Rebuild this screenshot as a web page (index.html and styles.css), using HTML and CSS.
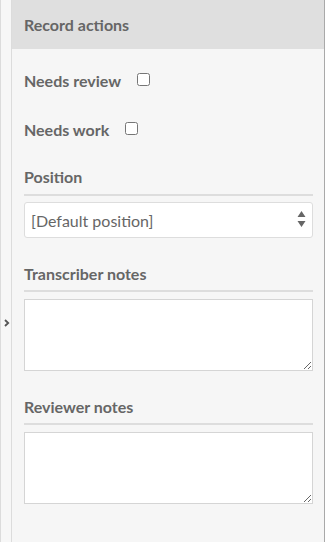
FILE: index.html
```html
<!DOCTYPE html>
<html lang="en">
<head>
<meta charset="utf-8">
<title>Record actions</title>
<link rel="stylesheet" href="styles.css">
</head>
<body>
<div class="layout">
  <div class="strip">
    <svg class="chev" width="6" height="8" viewBox="0 0 6 8"><path d="M1 1 L4.2 4 L1 7" fill="none" stroke="#555" stroke-width="1.8"/></svg>
  </div>
  <div class="panel">
    <div class="panel-head">Record actions</div>
    <div class="panel-body">
      <label class="check-row first"><span>Needs review</span><input type="checkbox"></label>
      <label class="check-row second"><span>Needs work</span><input type="checkbox"></label>
      <h3 class="field-label pos">Position</h3>
      <div class="select-wrap">
        <select class="select"><option>[Default position]</option></select>
        <svg class="arrows" width="9" height="17" viewBox="0 0 9 17"><path d="M4.5 0 L8.5 6 L0.5 6 Z M0.5 10 L8.5 10 L4.5 16 Z" fill="#666"/></svg>
      </div>
      <h3 class="field-label sec">Transcriber notes</h3>
      <textarea class="notes"></textarea>
      <h3 class="field-label sec">Reviewer notes</h3>
      <textarea class="notes"></textarea>
    </div>
  </div>
</div>
</body>
</html>
```

FILE: styles.css
```css
* { box-sizing: border-box; }
html, body { margin: 0; padding: 0; }
body {
  font-family: Lato, "Open Sans", sans-serif;
  background: #f6f6f6;
  width: 325px;
  height: 542px;
  overflow: hidden;
}
.layout {
  display: flex;
  height: 542px;
}
.strip {
  width: 12px;
  flex: none;
  background: #f7f7f7;
  border-left: 1px solid #dcdcdc;
  border-right: 1px solid #dcdcdc;
  padding-top: 319px;
  padding-left: 3px;
}
.chev { display: block; }
.panel {
  flex: 1;
  background: #f6f6f6;
  border-right: 1px solid #a9a9a9;
}
.panel-head {
  height: 49px;
  background: #dfdfdf;
  display: flex;
  align-items: center;
  padding-left: 12px;
  font-weight: 700;
  font-size: 16px;
  color: #666;
}
.panel-body {
  padding: 0 11px 0 12px;
}
.check-row {
  display: flex;
  align-items: center;
  font-weight: 700;
  font-size: 16px;
  line-height: 20px;
  color: #666;
}
.check-row.first { margin-top: 22px; }
.check-row.second { margin-top: 29px; }
.check-row input {
  width: 13px;
  height: 13px;
  margin: 0 0 4px 16px;
}
.field-label {
  margin: 0;
  font-weight: 700;
  font-size: 16px;
  line-height: 20px;
  color: #666;
  padding-bottom: 7px;
  border-bottom: 2px solid #dddddd;
}
.field-label.pos { margin-top: 27px; margin-bottom: 6px; }
.field-label.sec { margin-top: 26px; padding-bottom: 6px; margin-bottom: 7px; }
.select-wrap {
  position: relative;
}
.select {
  display: block;
  width: 100%;
  height: 36px;
  -webkit-appearance: none;
  appearance: none;
  background: #fff;
  border: 1px solid #dddddd;
  border-radius: 3px;
  padding: 0 0 0 6px;
  font-family: Lato, "Open Sans", sans-serif;
  font-size: 16px;
  color: #666;
  outline: none;
}
.arrows {
  position: absolute;
  right: 7px;
  top: 9px;
}
.notes {
  display: block;
  width: 100%;
  height: 72px;
  background: #fff;
  border: 1px solid #d5d5d5;
  border-radius: 0;
  margin: 0;
  resize: vertical;
  outline: none;
}
.notes + .field-label.sec { margin-top: 26px; }
```
